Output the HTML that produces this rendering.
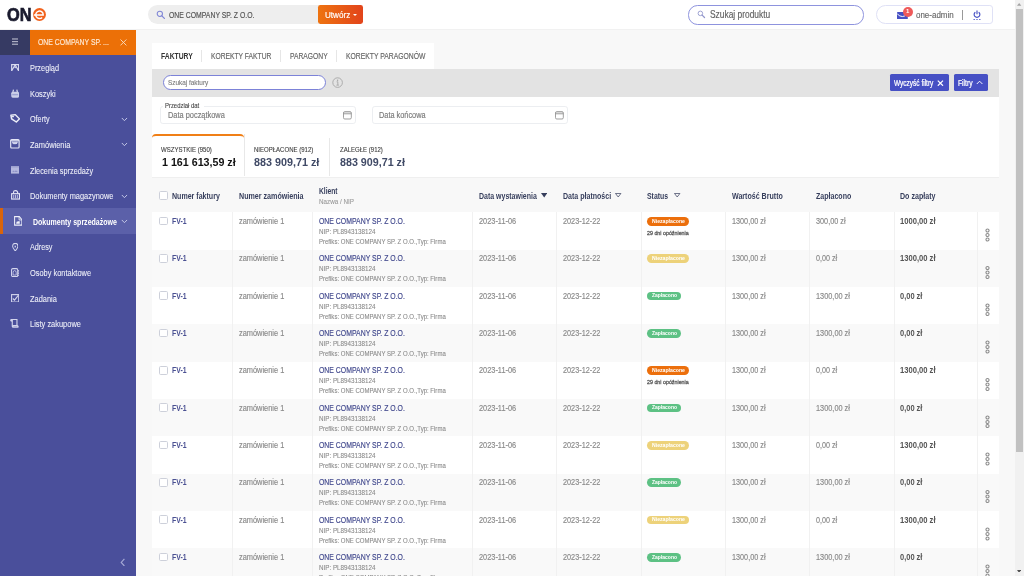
<!DOCTYPE html><html><head><meta charset="utf-8"><style>
*{box-sizing:border-box;margin:0;padding:0}
html,body{width:1024px;height:576px;overflow:hidden;background:#f8f8f8}
body{font-family:"Liberation Sans",sans-serif}
#app{position:absolute;left:0;top:0;width:1280px;height:720px;zoom:0.8;will-change:transform;background:#f8f8f8;overflow:hidden}
.a{position:absolute;white-space:nowrap}
.t{position:absolute;white-space:nowrap;transform-origin:0 0}
</style></head><body><div id="app"><div class="a" style="left:0;top:0;width:1280px;height:37.4px;background:#fff;border-bottom:1.1px solid #f1f1f1"></div>
<div class="t" style="left:8.88px;top:6.02px;font-size:21.8px;line-height:26.16px;font-weight:700;color:#1a1b2e;transform:scaleX(0.9388);-webkit-text-stroke:0.8px #1a1b2e;">ON</div>
<svg class="a" style="left:41.2px;top:10.3px" width="16.2" height="16.2" viewBox="0 0 16 16"><circle cx="8" cy="8" r="8" fill="#f2621c"/><path d="M1 8.6 H12.6 A4.6 4.6 0 1 0 11.3 11.6" fill="none" stroke="#fff" stroke-width="1.8"/></svg>
<div class="a" style="left:185px;top:6.5px;width:220px;height:24px;background:#eeeeee;border-radius:12px 0 0 12px"></div>
<svg class="a" style="left:194.5px;top:13px" width="12" height="12" viewBox="0 0 12 12"><circle cx="4.8" cy="4.8" r="3.3" fill="none" stroke="#7f86d6" stroke-width="1.3"/><path d="M7.3 7.3 L10.5 10.5" stroke="#7f86d6" stroke-width="1.6" stroke-linecap="round"/></svg>
<div class="t" style="left:211.25px;top:11.95px;font-size:10.4px;line-height:12.48px;font-weight:400;color:#555;transform:scaleX(0.8260);-webkit-text-stroke:0.2px #555;">ONE COMPANY SP. Z O.O.</div>
<div class="a" style="left:397.5px;top:6.5px;width:56px;height:24px;border-radius:3px;background:linear-gradient(90deg,#ee7310,#e2441b)"></div>
<div class="t" style="left:405.88px;top:12.18px;font-size:10.5px;line-height:12.60px;font-weight:400;color:#fff;transform:scaleX(0.9678);-webkit-text-stroke:0.2px #fff;">Utwórz</div>
<div class="a" style="left:441px;top:17px;width:0;height:0;border-left:3px solid transparent;border-right:3px solid transparent;border-top:3px solid #fff"></div>
<div class="a" style="left:860px;top:6.6px;width:219.5px;height:24.1px;border:1.3px solid #8e93de;border-radius:12px;background:#fff"></div>
<svg class="a" style="left:871px;top:13px" width="11" height="11" viewBox="0 0 12 12"><circle cx="4.6" cy="4.6" r="3.1" fill="none" stroke="#9296cc" stroke-width="1.2"/><path d="M7 7 L10.3 10.3" stroke="#9296cc" stroke-width="1.7" stroke-linecap="round"/></svg>
<div class="t" style="left:887.25px;top:11.76px;font-size:12.6px;line-height:15.12px;font-weight:400;color:#626262;transform:scaleX(0.8333);-webkit-text-stroke:0.2px #626262;">Szukaj produktu</div>
<div class="a" style="left:1095px;top:6.5px;width:146px;height:24px;border:1px solid #dfe1f6;border-radius:12px 4px 4px 12px;background:#fff"></div>
<svg class="a" style="left:1121px;top:14.4px" width="13.5" height="9.8" viewBox="0 0 13.5 9.8"><rect x="0" y="0" width="13.5" height="9.8" rx="0.8" fill="#4650c4"/><path d="M0.3 2.4 Q6.7 9 13.2 2.4" fill="none" stroke="#fff" stroke-width="1.2"/></svg>
<div class="a" style="left:1128.3px;top:8.8px;width:12.4px;height:12.4px;border-radius:50%;background:#ef5a5a;color:#fff;font-size:7.5px;font-weight:700;text-align:center;line-height:12.4px">1</div>
<div class="t" style="left:1144.88px;top:12.67px;font-size:11px;line-height:13.20px;font-weight:400;color:#6a6a6a;transform:scaleX(0.9063);-webkit-text-stroke:0.2px #6a6a6a;">one-admin</div>
<div class="a" style="left:1202.5px;top:12.5px;width:1px;height:12.5px;background:#999"></div>
<svg class="a" style="left:1216px;top:12.2px" width="10" height="13" viewBox="0 0 10 13"><path d="M2.9 2.7 A3.6 3.6 0 1 0 7.1 2.7" fill="none" stroke="#4650c4" stroke-width="1.45"/><path d="M5 0.5 V5.3" stroke="#4650c4" stroke-width="1.45"/><path d="M0.6 12.1 H2.4 M4.1 12.1 H5.9 M7.6 12.1 H9.4" stroke="#4650c4" stroke-width="1.25"/></svg>
<div class="a" style="left:0;top:37.5px;width:170.5px;height:683px;background:#4a4f9b"></div>
<div class="a" style="left:0;top:37.5px;width:37.5px;height:31px;background:#363a63"></div>
<div class="a" style="left:37.5px;top:37.5px;width:133px;height:31px;background:#ec7007"></div>
<svg class="a" style="left:14.6px;top:48px" width="8.2" height="9" viewBox="0 0 8.2 9"><path d="M0 1.25 H8.2 M0 4.6 H8.2 M0 7.75 H8.2" stroke="#dcdde8" stroke-width="1.1"/></svg>
<div class="t" style="left:47.88px;top:46.45px;font-size:10.4px;line-height:12.48px;font-weight:400;color:#fde8d4;transform:scaleX(0.8292);-webkit-text-stroke:0.2px #fde8d4;">ONE COMPANY SP. ...</div>
<svg class="a" style="left:150.6px;top:48.3px" width="8.6" height="8.6" viewBox="0 0 8.6 8.6"><path d="M0.6 0.6 L8 8 M8 0.6 L0.6 8" stroke="#fbdcc0" stroke-width="1.15"/></svg>
<svg class="a" style="left:13.50px;top:79.88px" width="10.38" height="9.38" viewBox="0 0 10 10" preserveAspectRatio="none"><path d="M0.8 9.2 V0.8 H9.2 V9.2 M0.8 9.2 L3.5 4 L5 1.5 L6.5 4 L9.2 9.2" fill="none" stroke="#d9dbef" stroke-width="1.4"/><circle cx="5" cy="4.5" r="1" fill="#d9dbef"/></svg>
<div class="t" style="left:37.38px;top:78.90px;font-size:10.5px;line-height:12.60px;font-weight:400;color:#eeeff8;transform:scaleX(0.8774);-webkit-text-stroke:0.1px #eeeff8;">Przegląd</div>
<svg class="a" style="left:13.50px;top:111.25px" width="10.38" height="11.13" viewBox="0 0 10 10" preserveAspectRatio="none"><path d="M2.3 3.5 L3 0.6 M7.7 3.5 L7 0.6" stroke="#d0d2ea" stroke-width="1.5"/><rect x="0.3" y="3" width="9.4" height="6.8" rx="1.8" fill="#cdd0e9"/><rect x="1.5" y="5.5" width="7" height="1.6" fill="#9ea2d2"/></svg>
<div class="t" style="left:37.38px;top:110.90px;font-size:10.5px;line-height:12.60px;font-weight:400;color:#eeeff8;transform:scaleX(0.8858);-webkit-text-stroke:0.1px #eeeff8;">Koszyki</div>
<svg class="a" style="left:12.50px;top:142.50px" width="12.75" height="10.88" viewBox="0 0 10 10" preserveAspectRatio="none"><path d="M0.9 1.2 L5.2 0.8 L9.3 5.6 L6.2 9.2 L1.6 5.6 Z" fill="none" stroke="#eceef8" stroke-width="1.5" stroke-linejoin="round"/><circle cx="2.9" cy="2.8" r="1" fill="#eceef8"/></svg>
<div class="t" style="left:37.38px;top:142.90px;font-size:10.5px;line-height:12.60px;font-weight:400;color:#eeeff8;transform:scaleX(0.8607);-webkit-text-stroke:0.1px #eeeff8;">Oferty</div>
<svg class="a" style="left:151.8px;top:146.0px" width="9" height="7" viewBox="0 0 9 7"><path d="M1 1.2 L4.3 4.6 L7.6 1.2" fill="none" stroke="#c3c6e6" stroke-width="1.25"/></svg>
<svg class="a" style="left:12.88px;top:173.88px" width="12.25" height="12.13" viewBox="0 0 10 10" preserveAspectRatio="none"><rect x="0.7" y="0.7" width="8.6" height="8.6" rx="1" fill="none" stroke="#e4e6f6" stroke-width="1.2"/><path d="M0.7 1.8 H9.3" stroke="#e4e6f6" stroke-width="1"/><path d="M2.6 2.6 V3.6 Q2.6 4.8 3.8 4.8 H6.2 Q7.4 4.8 7.4 3.6 V2.6" fill="#c8cbe8" stroke="#e4e6f6" stroke-width="0.9"/></svg>
<div class="t" style="left:37.38px;top:174.90px;font-size:10.5px;line-height:12.60px;font-weight:400;color:#eeeff8;transform:scaleX(0.8918);-webkit-text-stroke:0.1px #eeeff8;">Zamówienia</div>
<svg class="a" style="left:151.8px;top:178.0px" width="9" height="7" viewBox="0 0 9 7"><path d="M1 1.2 L4.3 4.6 L7.6 1.2" fill="none" stroke="#c3c6e6" stroke-width="1.25"/></svg>
<svg class="a" style="left:13.62px;top:207.75px" width="10.12" height="9.50" viewBox="0 0 10 10" preserveAspectRatio="none"><rect x="0" y="0" width="10" height="10" fill="#b4b7de"/><rect x="0" y="0" width="10" height="2" fill="#9da1d0"/><path d="M1.5 8 L3 6 L4.5 7.5 L6 5.5 L8.5 8 Z" fill="#8e92c8"/></svg>
<div class="t" style="left:37.38px;top:206.90px;font-size:10.5px;line-height:12.60px;font-weight:400;color:#eeeff8;transform:scaleX(0.8744);-webkit-text-stroke:0.1px #eeeff8;">Zlecenia sprzedaży</div>
<svg class="a" style="left:13.75px;top:237.75px" width="11.38" height="12.13" viewBox="0 0 10 10" preserveAspectRatio="none"><rect x="0.7" y="3.8" width="8.6" height="5.5" fill="none" stroke="#e4e6f6" stroke-width="1.2"/><path d="M2.8 3.8 V2 Q2.8 0.7 5 0.7 Q7.5 0.7 7.5 3.8" fill="none" stroke="#e4e6f6" stroke-width="1.2"/><path d="M3 5 V8.5 M5 5 V8.5 M7 5 V8.5" stroke="#c3c6e8" stroke-width="1"/></svg>
<div class="t" style="left:37.38px;top:238.90px;font-size:10.5px;line-height:12.60px;font-weight:400;color:#eeeff8;transform:scaleX(0.8852);-webkit-text-stroke:0.1px #eeeff8;">Dokumenty magazynowe</div>
<svg class="a" style="left:151.8px;top:242.0px" width="9" height="7" viewBox="0 0 9 7"><path d="M1 1.2 L4.3 4.6 L7.6 1.2" fill="none" stroke="#c3c6e6" stroke-width="1.25"/></svg>
<div class="a" style="left:0;top:260.6px;width:170.5px;height:32px;background:#5b60a9"></div>
<div class="a" style="left:0;top:260.6px;width:3.5px;height:32px;background:#d9640a"></div>
<svg class="a" style="left:17.12px;top:269.88px" width="10.62" height="12.38" viewBox="0 0 10 10" preserveAspectRatio="none"><path d="M0.7 0.7 H6.3 L9.3 3.7 V9.3 H0.7 Z" fill="none" stroke="#eef0fa" stroke-width="1.2"/><path d="M2.5 7.8 Q2.5 5.4 5 5.4 H6.8 V7.8 Z" fill="#eef0fa"/><path d="M6 1 V4 H9" fill="none" stroke="#eef0fa" stroke-width="0.9"/></svg>
<div class="t" style="left:40.75px;top:270.90px;font-size:10.5px;line-height:12.60px;font-weight:700;color:#fff;transform:scaleX(0.8369);">Dokumenty sprzedażowe</div>
<svg class="a" style="left:151.8px;top:274.0px" width="9" height="7" viewBox="0 0 9 7"><path d="M1 1.2 L4.3 4.6 L7.6 1.2" fill="none" stroke="#c3c6e6" stroke-width="1.25"/></svg>
<svg class="a" style="left:14.62px;top:303.25px" width="8.12" height="10.62" viewBox="0 0 10 10" preserveAspectRatio="none"><path d="M5 9.3 C1.8 6.5 0.9 5 0.9 3.9 A4.1 3.5 0 0 1 9.1 3.9 C9.1 5 8.2 6.5 5 9.3 Z" fill="none" stroke="#d5d7ee" stroke-width="1.4"/><rect x="4" y="3.2" width="2" height="2" fill="#d5d7ee"/></svg>
<div class="t" style="left:37.38px;top:302.90px;font-size:10.5px;line-height:12.60px;font-weight:400;color:#eeeff8;transform:scaleX(0.8600);-webkit-text-stroke:0.1px #eeeff8;">Adresy</div>
<svg class="a" style="left:13.62px;top:334.62px" width="10.12" height="11.50" viewBox="0 0 10 10" preserveAspectRatio="none"><rect x="0.7" y="0.7" width="7.6" height="8.6" rx="1.5" fill="none" stroke="#d5d7ee" stroke-width="1.3"/><path d="M9.3 2.5 V3.7 M9.3 5 V6.2 M9.3 7.3 V8.3" stroke="#d5d7ee" stroke-width="1.3"/><path d="M2.6 7.7 V5 Q2.6 2.8 4.5 2.8 Q6.4 2.8 6.4 5 V7.7 Z" fill="none" stroke="#d5d7ee" stroke-width="0.9"/></svg>
<div class="t" style="left:37.38px;top:334.90px;font-size:10.5px;line-height:12.60px;font-weight:400;color:#eeeff8;transform:scaleX(0.8840);-webkit-text-stroke:0.1px #eeeff8;">Osoby kontaktowe</div>
<svg class="a" style="left:13.38px;top:367.12px" width="10.38" height="10.87" viewBox="0 0 10 10" preserveAspectRatio="none"><rect x="0.7" y="0.7" width="8.6" height="8.6" fill="none" stroke="#d2d4ec" stroke-width="1.3"/><path d="M2.2 5.2 L4.2 7 L8.8 1.6" fill="none" stroke="#d2d4ec" stroke-width="1.4"/></svg>
<div class="t" style="left:37.38px;top:366.90px;font-size:10.5px;line-height:12.60px;font-weight:400;color:#eeeff8;transform:scaleX(0.8824);-webkit-text-stroke:0.1px #eeeff8;">Zadania</div>
<svg class="a" style="left:13.12px;top:398.88px" width="10.88" height="11.00" viewBox="0 0 10 10" preserveAspectRatio="none"><path d="M0.8 1.6 Q0.8 0.6 2 0.6 H8 V7.8" fill="none" stroke="#d2d4ec" stroke-width="1.3"/><path d="M2.6 1.2 V8.2 Q2.6 9.3 3.8 9.3 H8.8 Q9.5 9.3 9.2 8.2 Q8.9 7.5 8 7.5 H4 Q3.4 7.5 3.4 8.5" fill="none" stroke="#d2d4ec" stroke-width="1.3"/><circle cx="1.6" cy="1.8" r="1.2" fill="#d2d4ec"/></svg>
<div class="t" style="left:37.38px;top:398.90px;font-size:10.5px;line-height:12.60px;font-weight:400;color:#eeeff8;transform:scaleX(0.8878);-webkit-text-stroke:0.1px #eeeff8;">Listy zakupowe</div>
<svg class="a" style="left:150.5px;top:697px" width="7" height="11" viewBox="0 0 7 11"><path d="M5.5 1 L1.5 5.5 L5.5 10" fill="none" stroke="#a7abd6" stroke-width="1.4"/></svg>
<div class="a" style="left:190.6px;top:53.75px;width:351.4px;height:32.5px;background:#fff"></div>
<div class="t" style="left:201.50px;top:63.68px;font-size:10.5px;line-height:12.60px;font-weight:700;color:#333;transform:scaleX(0.8081);">FAKTURY</div>
<div class="t" style="left:263.25px;top:63.68px;font-size:10.5px;line-height:12.60px;font-weight:400;color:#666;transform:scaleX(0.8006);-webkit-text-stroke:0.2px #666;">KOREKTY FAKTUR</div>
<div class="t" style="left:362.00px;top:63.68px;font-size:10.5px;line-height:12.60px;font-weight:400;color:#666;transform:scaleX(0.8024);-webkit-text-stroke:0.2px #666;">PARAGONY</div>
<div class="t" style="left:432.00px;top:63.68px;font-size:10.5px;line-height:12.60px;font-weight:400;color:#666;transform:scaleX(0.8100);-webkit-text-stroke:0.2px #666;">KOREKTY PARAGONÓW</div>
<div class="a" style="left:251.6px;top:62.5px;width:1px;height:15px;background:#e6e6e6"></div>
<div class="a" style="left:350.4px;top:62.5px;width:1px;height:15px;background:#e6e6e6"></div>
<div class="a" style="left:420.4px;top:62.5px;width:1px;height:15px;background:#e6e6e6"></div>
<div class="a" style="left:190.6px;top:86.25px;width:1058px;height:35.6px;background:#e3e3e3"></div>
<div class="a" style="left:203.6px;top:93.9px;width:203.3px;height:18.5px;background:#fff;border:1.3px solid #7c82d8;border-radius:10px"></div>
<div class="t" style="left:210.12px;top:99.07px;font-size:8.5px;line-height:10.20px;font-weight:400;color:#777;transform:scaleX(0.9421);-webkit-text-stroke:0.12px #777;">Szukaj faktury</div>
<svg class="a" style="left:415px;top:96.5px" width="14" height="14" viewBox="0 0 14 14"><circle cx="7" cy="7" r="6" fill="none" stroke="#a5a5a5" stroke-width="1.1"/><circle cx="7" cy="4" r="0.9" fill="#a5a5a5"/><path d="M5.8 6 H7.3 V10 M5.6 10.2 H8.6" fill="none" stroke="#a5a5a5" stroke-width="1.1"/></svg>
<div class="a" style="left:1112px;top:92.9px;width:74.5px;height:21px;background:#4650c4;border-radius:2px"></div>
<div class="t" style="left:1117.62px;top:97.20px;font-size:10.4px;line-height:12.48px;font-weight:400;color:#fff;transform:scaleX(0.7819);-webkit-text-stroke:0.3px #fff;">Wyczyść filtry</div>
<svg class="a" style="left:1171px;top:99.5px" width="8.5" height="8" viewBox="0 0 8.5 8"><path d="M1 0.8 L7.5 7.2 M7.5 0.8 L1 7.2" stroke="#fff" stroke-width="1.5"/></svg>
<div class="a" style="left:1192.4px;top:92.9px;width:42.6px;height:21px;background:#4650c4;border-radius:2px"></div>
<div class="t" style="left:1198.12px;top:97.20px;font-size:10.4px;line-height:12.48px;font-weight:400;color:#fff;transform:scaleX(0.8043);-webkit-text-stroke:0.3px #fff;">Filtry</div>
<svg class="a" style="left:1220px;top:100px" width="9" height="6" viewBox="0 0 9 6"><path d="M1 5 L4.5 1.5 L8 5" fill="none" stroke="#fff" stroke-width="1.2"/></svg>
<div class="a" style="left:190.6px;top:121.8px;width:1058px;height:100.2px;background:#fff"></div>
<div class="a" style="left:200.4px;top:131.9px;width:244.7px;height:23px;border:1.1px solid #eceef1;border-radius:3.5px"></div>
<div class="a" style="left:204px;top:127px;width:51px;height:8px;background:#fff"></div>
<div class="t" style="left:205.75px;top:127.44px;font-size:8px;line-height:9.60px;font-weight:400;color:#444;transform:scaleX(0.9251);-webkit-text-stroke:0.12px #444;">Przedział dat</div>
<div class="t" style="left:209.50px;top:137.42px;font-size:11px;line-height:13.20px;font-weight:400;color:#7a7a7a;transform:scaleX(0.8415);-webkit-text-stroke:0.2px #7a7a7a;">Data początkowa</div>
<div class="a" style="left:465.6px;top:131.9px;width:244px;height:23px;border:1.1px solid #eceef1;border-radius:3.5px"></div>
<div class="t" style="left:474.12px;top:137.42px;font-size:11px;line-height:13.20px;font-weight:400;color:#7a7a7a;transform:scaleX(0.8358);-webkit-text-stroke:0.2px #7a7a7a;">Data końcowa</div>
<svg class="a" style="left:429px;top:139px" width="11" height="11" viewBox="0 0 11 11"><rect x="0.6" y="0.8" width="9.8" height="9.2" rx="1.6" fill="none" stroke="#8c8c8c" stroke-width="1.05"/><path d="M0.6 2.6 H10.4 M0.6 3.6 H10.4" stroke="#8c8c8c" stroke-width="0.8"/></svg>
<svg class="a" style="left:694px;top:139px" width="11" height="11" viewBox="0 0 11 11"><rect x="0.6" y="0.8" width="9.8" height="9.2" rx="1.6" fill="none" stroke="#8c8c8c" stroke-width="1.05"/><path d="M0.6 2.6 H10.4 M0.6 3.6 H10.4" stroke="#8c8c8c" stroke-width="0.8"/></svg>
<div class="a" style="left:190.6px;top:167.3px;width:114.4px;height:54.7px;background:#fff;border-top:2.6px solid #f07f16;border-radius:5px 5px 0 0"></div>
<div class="a" style="left:304.5px;top:168px;width:1px;height:51.5px;background:#e8e8e8"></div>
<div class="a" style="left:411.5px;top:172.4px;width:1px;height:47px;background:#e8e8e8"></div>
<div class="a" style="left:190.6px;top:221px;width:1058px;height:1px;background:#efefef"></div>
<div class="t" style="left:201.25px;top:181.94px;font-size:8.5px;line-height:10.20px;font-weight:400;color:#3a3a3a;transform:scaleX(0.8900);-webkit-text-stroke:0.12px #3a3a3a;">WSZYSTKIE (950)</div>
<div class="t" style="left:201.88px;top:193.90px;font-size:14.5px;line-height:17.40px;font-weight:700;color:#111;transform:scaleX(0.9218);">1 161 613,59 zł</div>
<div class="t" style="left:317.62px;top:181.94px;font-size:8.5px;line-height:10.20px;font-weight:400;color:#3a3a3a;transform:scaleX(0.8863);-webkit-text-stroke:0.12px #3a3a3a;">NIEOPŁACONE (912)</div>
<div class="t" style="left:317.62px;top:193.90px;font-size:14.5px;line-height:17.40px;font-weight:700;color:#404a66;transform:scaleX(0.9291);">883 909,71 zł</div>
<div class="t" style="left:424.38px;top:181.94px;font-size:8.5px;line-height:10.20px;font-weight:400;color:#3a3a3a;transform:scaleX(0.8864);-webkit-text-stroke:0.12px #3a3a3a;">ZALEGŁE (912)</div>
<div class="t" style="left:424.38px;top:193.90px;font-size:14.5px;line-height:17.40px;font-weight:700;color:#404a66;transform:scaleX(0.9235);">883 909,71 zł</div>
<div class="a" style="left:190.6px;top:222px;width:1058.4px;height:43.25px;background:#f8f8f8"></div>
<div class="t" style="left:215.00px;top:238.45px;font-size:10.4px;line-height:12.48px;font-weight:700;color:#363e5c;transform:scaleX(0.8490);">Numer faktury</div>
<div class="t" style="left:298.50px;top:238.45px;font-size:10.4px;line-height:12.48px;font-weight:700;color:#363e5c;transform:scaleX(0.8573);">Numer zamówienia</div>
<div class="t" style="left:599.12px;top:238.45px;font-size:10.4px;line-height:12.48px;font-weight:700;color:#363e5c;transform:scaleX(0.8404);">Data wystawienia</div>
<div class="t" style="left:703.75px;top:238.45px;font-size:10.4px;line-height:12.48px;font-weight:700;color:#363e5c;transform:scaleX(0.8470);">Data płatności</div>
<div class="t" style="left:809.00px;top:238.45px;font-size:10.4px;line-height:12.48px;font-weight:700;color:#363e5c;transform:scaleX(0.8287);">Status</div>
<div class="t" style="left:914.50px;top:238.45px;font-size:10.4px;line-height:12.48px;font-weight:700;color:#363e5c;transform:scaleX(0.8512);">Wartość Brutto</div>
<div class="t" style="left:1019.88px;top:238.45px;font-size:10.4px;line-height:12.48px;font-weight:700;color:#363e5c;transform:scaleX(0.8477);">Zapłacono</div>
<div class="t" style="left:1124.62px;top:238.45px;font-size:10.4px;line-height:12.48px;font-weight:700;color:#363e5c;transform:scaleX(0.8527);">Do zapłaty</div>
<div class="t" style="left:399.12px;top:232.83px;font-size:10.4px;line-height:12.48px;font-weight:700;color:#363e5c;transform:scaleX(0.8035);">Klient</div>
<div class="t" style="left:399.12px;top:246.94px;font-size:8.5px;line-height:10.20px;font-weight:400;color:#999;transform:scaleX(0.9250);-webkit-text-stroke:0.12px #999;">Nazwa / NIP</div>
<div class="a" style="left:198.75px;top:238.9px;width:10.75px;height:10.75px;border:1.1px solid #cdd0da;border-radius:2px;background:#fff"></div>
<svg class="a" style="left:676px;top:241px" width="8" height="6" viewBox="0 0 8 6"><path d="M0 0 H8 L4 5.5 Z" fill="#363e5c"/></svg>
<svg class="a" style="left:769px;top:241px" width="8" height="6" viewBox="0 0 8 6"><path d="M0.6 0.6 H7.4 L4 5 Z" fill="none" stroke="#363e5c" stroke-width="0.9"/></svg>
<svg class="a" style="left:843px;top:241px" width="8" height="6" viewBox="0 0 8 6"><path d="M0.6 0.6 H7.4 L4 5 Z" fill="none" stroke="#363e5c" stroke-width="0.9"/></svg>
<div class="a" style="left:190.6px;top:265.25px;width:1058.4px;height:46.98px;background:#fff"></div>
<div class="a" style="left:290.3px;top:265.25px;width:1px;height:46.98px;background:#f1f1f1"></div>
<div class="a" style="left:390.6px;top:265.25px;width:1px;height:46.98px;background:#f1f1f1"></div>
<div class="a" style="left:590.4px;top:265.25px;width:1px;height:46.98px;background:#f1f1f1"></div>
<div class="a" style="left:695px;top:265.25px;width:1px;height:46.98px;background:#f1f1f1"></div>
<div class="a" style="left:800.9px;top:265.25px;width:1px;height:46.98px;background:#f1f1f1"></div>
<div class="a" style="left:905.75px;top:265.25px;width:1px;height:46.98px;background:#f1f1f1"></div>
<div class="a" style="left:1011.5px;top:265.25px;width:1px;height:46.98px;background:#f1f1f1"></div>
<div class="a" style="left:1116.9px;top:265.25px;width:1px;height:46.98px;background:#f1f1f1"></div>
<div class="a" style="left:1221.4px;top:265.25px;width:1px;height:46.98px;background:#f1f1f1"></div>
<div class="a" style="left:198.75px;top:270.85px;width:10.75px;height:10.75px;border:1.1px solid #cdd0da;border-radius:2px;background:#fff"></div>
<div class="t" style="left:214.88px;top:270.08px;font-size:10.4px;line-height:12.48px;font-weight:700;color:#4a5092;transform:scaleX(0.8291);">FV-1</div>
<div class="t" style="left:298.75px;top:270.08px;font-size:10.4px;line-height:12.48px;font-weight:400;color:#8a8a8a;transform:scaleX(0.8902);-webkit-text-stroke:0.2px #8a8a8a;">zamówienie 1</div>
<div class="t" style="left:398.62px;top:270.08px;font-size:10.4px;line-height:12.48px;font-weight:400;color:#434a8e;transform:scaleX(0.8299);-webkit-text-stroke:0.2px #434a8e;">ONE COMPANY SP. Z O.O.</div>
<div class="t" style="left:398.62px;top:284.82px;font-size:8.5px;line-height:10.20px;font-weight:400;color:#8a8a8a;transform:scaleX(0.9224);-webkit-text-stroke:0.12px #8a8a8a;">NIP: PL8943138124</div>
<div class="t" style="left:398.62px;top:297.57px;font-size:8.5px;line-height:10.20px;font-weight:400;color:#8a8a8a;transform:scaleX(0.8854);-webkit-text-stroke:0.12px #8a8a8a;">Prefiks: ONE COMPANY SP. Z O.O.,Typ: Firma</div>
<div class="t" style="left:598.62px;top:270.08px;font-size:10.4px;line-height:12.48px;font-weight:400;color:#8a8a8a;transform:scaleX(0.8864);-webkit-text-stroke:0.2px #8a8a8a;">2023-11-06</div>
<div class="t" style="left:703.88px;top:270.08px;font-size:10.4px;line-height:12.48px;font-weight:400;color:#8a8a8a;transform:scaleX(0.8783);-webkit-text-stroke:0.2px #8a8a8a;">2023-12-22</div>
<div class="a" style="left:808.75px;top:271.25px;width:52.4px;height:10.75px;border-radius:6px;background:#ec6f0c"></div>
<div class="t" style="left:814.62px;top:271.95px;font-size:7.5px;line-height:9.00px;font-weight:700;color:#fff;transform:scaleX(0.8584);">Niezapłacone</div>
<div class="t" style="left:809.25px;top:287.45px;font-size:7.5px;line-height:9.00px;font-weight:400;color:#555;transform:scaleX(0.8868);-webkit-text-stroke:0.35px #555;">29 dni opóźnienia</div>
<div class="t" style="left:914.50px;top:270.08px;font-size:10.4px;line-height:12.48px;font-weight:400;color:#8a8a8a;transform:scaleX(0.8737);-webkit-text-stroke:0.2px #8a8a8a;">1300,00 zł</div>
<div class="t" style="left:1019.50px;top:270.08px;font-size:10.4px;line-height:12.48px;font-weight:400;color:#8a8a8a;transform:scaleX(0.8749);-webkit-text-stroke:0.2px #8a8a8a;">300,00 zł</div>
<div class="t" style="left:1125.00px;top:270.08px;font-size:10.4px;line-height:12.48px;font-weight:700;color:#555;transform:scaleX(0.9149);">1000,00 zł</div>
<svg class="a" style="left:1230.0px;top:285.0px;overflow:visible" width="8.75" height="20.0" viewBox="0 0 7 16"><circle cx="3.5" cy="2.5" r="1.55" fill="none" stroke="#8a8a8a" stroke-width="1.05"/><circle cx="3.5" cy="7.0" r="1.55" fill="none" stroke="#8a8a8a" stroke-width="1.05"/><circle cx="3.5" cy="11.5" r="1.55" fill="none" stroke="#8a8a8a" stroke-width="1.05"/></svg>
<div class="a" style="left:190.6px;top:311.93px;width:1058.4px;height:46.98px;background:#f9f9f9"></div>
<div class="a" style="left:290.3px;top:311.93px;width:1px;height:46.98px;background:#f1f1f1"></div>
<div class="a" style="left:390.6px;top:311.93px;width:1px;height:46.98px;background:#f1f1f1"></div>
<div class="a" style="left:590.4px;top:311.93px;width:1px;height:46.98px;background:#f1f1f1"></div>
<div class="a" style="left:695px;top:311.93px;width:1px;height:46.98px;background:#f1f1f1"></div>
<div class="a" style="left:800.9px;top:311.93px;width:1px;height:46.98px;background:#f1f1f1"></div>
<div class="a" style="left:905.75px;top:311.93px;width:1px;height:46.98px;background:#f1f1f1"></div>
<div class="a" style="left:1011.5px;top:311.93px;width:1px;height:46.98px;background:#f1f1f1"></div>
<div class="a" style="left:1116.9px;top:311.93px;width:1px;height:46.98px;background:#f1f1f1"></div>
<div class="a" style="left:1221.4px;top:311.93px;width:1px;height:46.98px;background:#f1f1f1"></div>
<div class="a" style="left:198.75px;top:317.53000000000003px;width:10.75px;height:10.75px;border:1.1px solid #cdd0da;border-radius:2px;background:#fff"></div>
<div class="t" style="left:214.88px;top:316.76px;font-size:10.4px;line-height:12.48px;font-weight:700;color:#4a5092;transform:scaleX(0.8291);">FV-1</div>
<div class="t" style="left:298.75px;top:316.76px;font-size:10.4px;line-height:12.48px;font-weight:400;color:#8a8a8a;transform:scaleX(0.8902);-webkit-text-stroke:0.2px #8a8a8a;">zamówienie 1</div>
<div class="t" style="left:398.62px;top:316.76px;font-size:10.4px;line-height:12.48px;font-weight:400;color:#434a8e;transform:scaleX(0.8299);-webkit-text-stroke:0.2px #434a8e;">ONE COMPANY SP. Z O.O.</div>
<div class="t" style="left:398.62px;top:331.50px;font-size:8.5px;line-height:10.20px;font-weight:400;color:#8a8a8a;transform:scaleX(0.9224);-webkit-text-stroke:0.12px #8a8a8a;">NIP: PL8943138124</div>
<div class="t" style="left:398.62px;top:344.25px;font-size:8.5px;line-height:10.20px;font-weight:400;color:#8a8a8a;transform:scaleX(0.8854);-webkit-text-stroke:0.12px #8a8a8a;">Prefiks: ONE COMPANY SP. Z O.O.,Typ: Firma</div>
<div class="t" style="left:598.62px;top:316.76px;font-size:10.4px;line-height:12.48px;font-weight:400;color:#8a8a8a;transform:scaleX(0.8864);-webkit-text-stroke:0.2px #8a8a8a;">2023-11-06</div>
<div class="t" style="left:703.88px;top:316.76px;font-size:10.4px;line-height:12.48px;font-weight:400;color:#8a8a8a;transform:scaleX(0.8783);-webkit-text-stroke:0.2px #8a8a8a;">2023-12-22</div>
<div class="a" style="left:808.75px;top:317.93px;width:52.4px;height:10.75px;border-radius:6px;background:#edd27a"></div>
<div class="t" style="left:814.62px;top:318.63px;font-size:7.5px;line-height:9.00px;font-weight:700;color:#fff;transform:scaleX(0.8584);">Niezapłacone</div>
<div class="t" style="left:914.50px;top:316.76px;font-size:10.4px;line-height:12.48px;font-weight:400;color:#8a8a8a;transform:scaleX(0.8737);-webkit-text-stroke:0.2px #8a8a8a;">1300,00 zł</div>
<div class="t" style="left:1019.50px;top:316.76px;font-size:10.4px;line-height:12.48px;font-weight:400;color:#8a8a8a;transform:scaleX(0.8625);-webkit-text-stroke:0.2px #8a8a8a;">0,00 zł</div>
<div class="t" style="left:1125.00px;top:316.76px;font-size:10.4px;line-height:12.48px;font-weight:700;color:#555;transform:scaleX(0.9149);">1300,00 zł</div>
<svg class="a" style="left:1230.0px;top:331.25px;overflow:visible" width="8.75" height="20.0" viewBox="0 0 7 16"><circle cx="3.5" cy="3.0" r="1.55" fill="none" stroke="#8a8a8a" stroke-width="1.05"/><circle cx="3.5" cy="7.5" r="1.55" fill="none" stroke="#8a8a8a" stroke-width="1.05"/><circle cx="3.5" cy="12.0" r="1.55" fill="none" stroke="#8a8a8a" stroke-width="1.05"/></svg>
<div class="a" style="left:190.6px;top:358.61px;width:1058.4px;height:46.98px;background:#fff"></div>
<div class="a" style="left:290.3px;top:358.61px;width:1px;height:46.98px;background:#f1f1f1"></div>
<div class="a" style="left:390.6px;top:358.61px;width:1px;height:46.98px;background:#f1f1f1"></div>
<div class="a" style="left:590.4px;top:358.61px;width:1px;height:46.98px;background:#f1f1f1"></div>
<div class="a" style="left:695px;top:358.61px;width:1px;height:46.98px;background:#f1f1f1"></div>
<div class="a" style="left:800.9px;top:358.61px;width:1px;height:46.98px;background:#f1f1f1"></div>
<div class="a" style="left:905.75px;top:358.61px;width:1px;height:46.98px;background:#f1f1f1"></div>
<div class="a" style="left:1011.5px;top:358.61px;width:1px;height:46.98px;background:#f1f1f1"></div>
<div class="a" style="left:1116.9px;top:358.61px;width:1px;height:46.98px;background:#f1f1f1"></div>
<div class="a" style="left:1221.4px;top:358.61px;width:1px;height:46.98px;background:#f1f1f1"></div>
<div class="a" style="left:198.75px;top:364.21000000000004px;width:10.75px;height:10.75px;border:1.1px solid #cdd0da;border-radius:2px;background:#fff"></div>
<div class="t" style="left:214.88px;top:363.44px;font-size:10.4px;line-height:12.48px;font-weight:700;color:#4a5092;transform:scaleX(0.8291);">FV-1</div>
<div class="t" style="left:298.75px;top:363.44px;font-size:10.4px;line-height:12.48px;font-weight:400;color:#8a8a8a;transform:scaleX(0.8902);-webkit-text-stroke:0.2px #8a8a8a;">zamówienie 1</div>
<div class="t" style="left:398.62px;top:363.44px;font-size:10.4px;line-height:12.48px;font-weight:400;color:#434a8e;transform:scaleX(0.8299);-webkit-text-stroke:0.2px #434a8e;">ONE COMPANY SP. Z O.O.</div>
<div class="t" style="left:398.62px;top:378.18px;font-size:8.5px;line-height:10.20px;font-weight:400;color:#8a8a8a;transform:scaleX(0.9224);-webkit-text-stroke:0.12px #8a8a8a;">NIP: PL8943138124</div>
<div class="t" style="left:398.62px;top:390.93px;font-size:8.5px;line-height:10.20px;font-weight:400;color:#8a8a8a;transform:scaleX(0.8854);-webkit-text-stroke:0.12px #8a8a8a;">Prefiks: ONE COMPANY SP. Z O.O.,Typ: Firma</div>
<div class="t" style="left:598.62px;top:363.44px;font-size:10.4px;line-height:12.48px;font-weight:400;color:#8a8a8a;transform:scaleX(0.8864);-webkit-text-stroke:0.2px #8a8a8a;">2023-11-06</div>
<div class="t" style="left:703.88px;top:363.44px;font-size:10.4px;line-height:12.48px;font-weight:400;color:#8a8a8a;transform:scaleX(0.8783);-webkit-text-stroke:0.2px #8a8a8a;">2023-12-22</div>
<div class="a" style="left:808.75px;top:364.61px;width:43px;height:10.75px;border-radius:6px;background:#5dc184"></div>
<div class="t" style="left:814.62px;top:365.31px;font-size:7.5px;line-height:9.00px;font-weight:700;color:#fff;transform:scaleX(0.8339);">Zapłacono</div>
<div class="t" style="left:914.50px;top:363.44px;font-size:10.4px;line-height:12.48px;font-weight:400;color:#8a8a8a;transform:scaleX(0.8737);-webkit-text-stroke:0.2px #8a8a8a;">1300,00 zł</div>
<div class="t" style="left:1019.50px;top:363.44px;font-size:10.4px;line-height:12.48px;font-weight:400;color:#8a8a8a;transform:scaleX(0.8840);-webkit-text-stroke:0.2px #8a8a8a;">1300,00 zł</div>
<div class="t" style="left:1125.00px;top:363.44px;font-size:10.4px;line-height:12.48px;font-weight:700;color:#555;transform:scaleX(0.8984);">0,00 zł</div>
<svg class="a" style="left:1230.0px;top:377.5px;overflow:visible" width="8.75" height="20.0" viewBox="0 0 7 16"><circle cx="3.5" cy="3.5" r="1.55" fill="none" stroke="#8a8a8a" stroke-width="1.05"/><circle cx="3.5" cy="7.5" r="1.55" fill="none" stroke="#8a8a8a" stroke-width="1.05"/><circle cx="3.5" cy="12.0" r="1.55" fill="none" stroke="#8a8a8a" stroke-width="1.05"/></svg>
<div class="a" style="left:190.6px;top:405.28999999999996px;width:1058.4px;height:46.98px;background:#f9f9f9"></div>
<div class="a" style="left:290.3px;top:405.28999999999996px;width:1px;height:46.98px;background:#f1f1f1"></div>
<div class="a" style="left:390.6px;top:405.28999999999996px;width:1px;height:46.98px;background:#f1f1f1"></div>
<div class="a" style="left:590.4px;top:405.28999999999996px;width:1px;height:46.98px;background:#f1f1f1"></div>
<div class="a" style="left:695px;top:405.28999999999996px;width:1px;height:46.98px;background:#f1f1f1"></div>
<div class="a" style="left:800.9px;top:405.28999999999996px;width:1px;height:46.98px;background:#f1f1f1"></div>
<div class="a" style="left:905.75px;top:405.28999999999996px;width:1px;height:46.98px;background:#f1f1f1"></div>
<div class="a" style="left:1011.5px;top:405.28999999999996px;width:1px;height:46.98px;background:#f1f1f1"></div>
<div class="a" style="left:1116.9px;top:405.28999999999996px;width:1px;height:46.98px;background:#f1f1f1"></div>
<div class="a" style="left:1221.4px;top:405.28999999999996px;width:1px;height:46.98px;background:#f1f1f1"></div>
<div class="a" style="left:198.75px;top:410.89px;width:10.75px;height:10.75px;border:1.1px solid #cdd0da;border-radius:2px;background:#fff"></div>
<div class="t" style="left:214.88px;top:410.12px;font-size:10.4px;line-height:12.48px;font-weight:700;color:#4a5092;transform:scaleX(0.8291);">FV-1</div>
<div class="t" style="left:298.75px;top:410.12px;font-size:10.4px;line-height:12.48px;font-weight:400;color:#8a8a8a;transform:scaleX(0.8902);-webkit-text-stroke:0.2px #8a8a8a;">zamówienie 1</div>
<div class="t" style="left:398.62px;top:410.12px;font-size:10.4px;line-height:12.48px;font-weight:400;color:#434a8e;transform:scaleX(0.8299);-webkit-text-stroke:0.2px #434a8e;">ONE COMPANY SP. Z O.O.</div>
<div class="t" style="left:398.62px;top:424.86px;font-size:8.5px;line-height:10.20px;font-weight:400;color:#8a8a8a;transform:scaleX(0.9224);-webkit-text-stroke:0.12px #8a8a8a;">NIP: PL8943138124</div>
<div class="t" style="left:398.62px;top:437.61px;font-size:8.5px;line-height:10.20px;font-weight:400;color:#8a8a8a;transform:scaleX(0.8854);-webkit-text-stroke:0.12px #8a8a8a;">Prefiks: ONE COMPANY SP. Z O.O.,Typ: Firma</div>
<div class="t" style="left:598.62px;top:410.12px;font-size:10.4px;line-height:12.48px;font-weight:400;color:#8a8a8a;transform:scaleX(0.8864);-webkit-text-stroke:0.2px #8a8a8a;">2023-11-06</div>
<div class="t" style="left:703.88px;top:410.12px;font-size:10.4px;line-height:12.48px;font-weight:400;color:#8a8a8a;transform:scaleX(0.8783);-webkit-text-stroke:0.2px #8a8a8a;">2023-12-22</div>
<div class="a" style="left:808.75px;top:411.28999999999996px;width:43px;height:10.75px;border-radius:6px;background:#5dc184"></div>
<div class="t" style="left:814.62px;top:411.99px;font-size:7.5px;line-height:9.00px;font-weight:700;color:#fff;transform:scaleX(0.8339);">Zapłacono</div>
<div class="t" style="left:914.50px;top:410.12px;font-size:10.4px;line-height:12.48px;font-weight:400;color:#8a8a8a;transform:scaleX(0.8737);-webkit-text-stroke:0.2px #8a8a8a;">1300,00 zł</div>
<div class="t" style="left:1019.50px;top:410.12px;font-size:10.4px;line-height:12.48px;font-weight:400;color:#8a8a8a;transform:scaleX(0.8840);-webkit-text-stroke:0.2px #8a8a8a;">1300,00 zł</div>
<div class="t" style="left:1125.00px;top:410.12px;font-size:10.4px;line-height:12.48px;font-weight:700;color:#555;transform:scaleX(0.8984);">0,00 zł</div>
<svg class="a" style="left:1230.0px;top:425.0px;overflow:visible" width="8.75" height="20.0" viewBox="0 0 7 16"><circle cx="3.5" cy="2.5" r="1.55" fill="none" stroke="#8a8a8a" stroke-width="1.05"/><circle cx="3.5" cy="7.0" r="1.55" fill="none" stroke="#8a8a8a" stroke-width="1.05"/><circle cx="3.5" cy="11.5" r="1.55" fill="none" stroke="#8a8a8a" stroke-width="1.05"/></svg>
<div class="a" style="left:190.6px;top:451.97px;width:1058.4px;height:46.98px;background:#fff"></div>
<div class="a" style="left:290.3px;top:451.97px;width:1px;height:46.98px;background:#f1f1f1"></div>
<div class="a" style="left:390.6px;top:451.97px;width:1px;height:46.98px;background:#f1f1f1"></div>
<div class="a" style="left:590.4px;top:451.97px;width:1px;height:46.98px;background:#f1f1f1"></div>
<div class="a" style="left:695px;top:451.97px;width:1px;height:46.98px;background:#f1f1f1"></div>
<div class="a" style="left:800.9px;top:451.97px;width:1px;height:46.98px;background:#f1f1f1"></div>
<div class="a" style="left:905.75px;top:451.97px;width:1px;height:46.98px;background:#f1f1f1"></div>
<div class="a" style="left:1011.5px;top:451.97px;width:1px;height:46.98px;background:#f1f1f1"></div>
<div class="a" style="left:1116.9px;top:451.97px;width:1px;height:46.98px;background:#f1f1f1"></div>
<div class="a" style="left:1221.4px;top:451.97px;width:1px;height:46.98px;background:#f1f1f1"></div>
<div class="a" style="left:198.75px;top:457.57000000000005px;width:10.75px;height:10.75px;border:1.1px solid #cdd0da;border-radius:2px;background:#fff"></div>
<div class="t" style="left:214.88px;top:456.80px;font-size:10.4px;line-height:12.48px;font-weight:700;color:#4a5092;transform:scaleX(0.8291);">FV-1</div>
<div class="t" style="left:298.75px;top:456.80px;font-size:10.4px;line-height:12.48px;font-weight:400;color:#8a8a8a;transform:scaleX(0.8902);-webkit-text-stroke:0.2px #8a8a8a;">zamówienie 1</div>
<div class="t" style="left:398.62px;top:456.80px;font-size:10.4px;line-height:12.48px;font-weight:400;color:#434a8e;transform:scaleX(0.8299);-webkit-text-stroke:0.2px #434a8e;">ONE COMPANY SP. Z O.O.</div>
<div class="t" style="left:398.62px;top:471.54px;font-size:8.5px;line-height:10.20px;font-weight:400;color:#8a8a8a;transform:scaleX(0.9224);-webkit-text-stroke:0.12px #8a8a8a;">NIP: PL8943138124</div>
<div class="t" style="left:398.62px;top:484.29px;font-size:8.5px;line-height:10.20px;font-weight:400;color:#8a8a8a;transform:scaleX(0.8854);-webkit-text-stroke:0.12px #8a8a8a;">Prefiks: ONE COMPANY SP. Z O.O.,Typ: Firma</div>
<div class="t" style="left:598.62px;top:456.80px;font-size:10.4px;line-height:12.48px;font-weight:400;color:#8a8a8a;transform:scaleX(0.8864);-webkit-text-stroke:0.2px #8a8a8a;">2023-11-06</div>
<div class="t" style="left:703.88px;top:456.80px;font-size:10.4px;line-height:12.48px;font-weight:400;color:#8a8a8a;transform:scaleX(0.8783);-webkit-text-stroke:0.2px #8a8a8a;">2023-12-22</div>
<div class="a" style="left:808.75px;top:457.97px;width:52.4px;height:10.75px;border-radius:6px;background:#ec6f0c"></div>
<div class="t" style="left:814.62px;top:458.67px;font-size:7.5px;line-height:9.00px;font-weight:700;color:#fff;transform:scaleX(0.8584);">Niezapłacone</div>
<div class="t" style="left:809.25px;top:474.17px;font-size:7.5px;line-height:9.00px;font-weight:400;color:#555;transform:scaleX(0.8868);-webkit-text-stroke:0.35px #555;">29 dni opóźnienia</div>
<div class="t" style="left:914.50px;top:456.80px;font-size:10.4px;line-height:12.48px;font-weight:400;color:#8a8a8a;transform:scaleX(0.8737);-webkit-text-stroke:0.2px #8a8a8a;">1300,00 zł</div>
<div class="t" style="left:1019.50px;top:456.80px;font-size:10.4px;line-height:12.48px;font-weight:400;color:#8a8a8a;transform:scaleX(0.8625);-webkit-text-stroke:0.2px #8a8a8a;">0,00 zł</div>
<div class="t" style="left:1125.00px;top:456.80px;font-size:10.4px;line-height:12.48px;font-weight:700;color:#555;transform:scaleX(0.9149);">1300,00 zł</div>
<svg class="a" style="left:1230.0px;top:471.25px;overflow:visible" width="8.75" height="20.0" viewBox="0 0 7 16"><circle cx="3.5" cy="3.0" r="1.55" fill="none" stroke="#8a8a8a" stroke-width="1.05"/><circle cx="3.5" cy="7.5" r="1.55" fill="none" stroke="#8a8a8a" stroke-width="1.05"/><circle cx="3.5" cy="12.0" r="1.55" fill="none" stroke="#8a8a8a" stroke-width="1.05"/></svg>
<div class="a" style="left:190.6px;top:498.65px;width:1058.4px;height:46.98px;background:#f9f9f9"></div>
<div class="a" style="left:290.3px;top:498.65px;width:1px;height:46.98px;background:#f1f1f1"></div>
<div class="a" style="left:390.6px;top:498.65px;width:1px;height:46.98px;background:#f1f1f1"></div>
<div class="a" style="left:590.4px;top:498.65px;width:1px;height:46.98px;background:#f1f1f1"></div>
<div class="a" style="left:695px;top:498.65px;width:1px;height:46.98px;background:#f1f1f1"></div>
<div class="a" style="left:800.9px;top:498.65px;width:1px;height:46.98px;background:#f1f1f1"></div>
<div class="a" style="left:905.75px;top:498.65px;width:1px;height:46.98px;background:#f1f1f1"></div>
<div class="a" style="left:1011.5px;top:498.65px;width:1px;height:46.98px;background:#f1f1f1"></div>
<div class="a" style="left:1116.9px;top:498.65px;width:1px;height:46.98px;background:#f1f1f1"></div>
<div class="a" style="left:1221.4px;top:498.65px;width:1px;height:46.98px;background:#f1f1f1"></div>
<div class="a" style="left:198.75px;top:504.25px;width:10.75px;height:10.75px;border:1.1px solid #cdd0da;border-radius:2px;background:#fff"></div>
<div class="t" style="left:214.88px;top:503.48px;font-size:10.4px;line-height:12.48px;font-weight:700;color:#4a5092;transform:scaleX(0.8291);">FV-1</div>
<div class="t" style="left:298.75px;top:503.48px;font-size:10.4px;line-height:12.48px;font-weight:400;color:#8a8a8a;transform:scaleX(0.8902);-webkit-text-stroke:0.2px #8a8a8a;">zamówienie 1</div>
<div class="t" style="left:398.62px;top:503.48px;font-size:10.4px;line-height:12.48px;font-weight:400;color:#434a8e;transform:scaleX(0.8299);-webkit-text-stroke:0.2px #434a8e;">ONE COMPANY SP. Z O.O.</div>
<div class="t" style="left:398.62px;top:518.22px;font-size:8.5px;line-height:10.20px;font-weight:400;color:#8a8a8a;transform:scaleX(0.9224);-webkit-text-stroke:0.12px #8a8a8a;">NIP: PL8943138124</div>
<div class="t" style="left:398.62px;top:530.97px;font-size:8.5px;line-height:10.20px;font-weight:400;color:#8a8a8a;transform:scaleX(0.8854);-webkit-text-stroke:0.12px #8a8a8a;">Prefiks: ONE COMPANY SP. Z O.O.,Typ: Firma</div>
<div class="t" style="left:598.62px;top:503.48px;font-size:10.4px;line-height:12.48px;font-weight:400;color:#8a8a8a;transform:scaleX(0.8864);-webkit-text-stroke:0.2px #8a8a8a;">2023-11-06</div>
<div class="t" style="left:703.88px;top:503.48px;font-size:10.4px;line-height:12.48px;font-weight:400;color:#8a8a8a;transform:scaleX(0.8783);-webkit-text-stroke:0.2px #8a8a8a;">2023-12-22</div>
<div class="a" style="left:808.75px;top:504.65px;width:43px;height:10.75px;border-radius:6px;background:#5dc184"></div>
<div class="t" style="left:814.62px;top:505.35px;font-size:7.5px;line-height:9.00px;font-weight:700;color:#fff;transform:scaleX(0.8339);">Zapłacono</div>
<div class="t" style="left:914.50px;top:503.48px;font-size:10.4px;line-height:12.48px;font-weight:400;color:#8a8a8a;transform:scaleX(0.8737);-webkit-text-stroke:0.2px #8a8a8a;">1300,00 zł</div>
<div class="t" style="left:1019.50px;top:503.48px;font-size:10.4px;line-height:12.48px;font-weight:400;color:#8a8a8a;transform:scaleX(0.8840);-webkit-text-stroke:0.2px #8a8a8a;">1300,00 zł</div>
<div class="t" style="left:1125.00px;top:503.48px;font-size:10.4px;line-height:12.48px;font-weight:700;color:#555;transform:scaleX(0.8984);">0,00 zł</div>
<svg class="a" style="left:1230.0px;top:517.5px;overflow:visible" width="8.75" height="20.0" viewBox="0 0 7 16"><circle cx="3.5" cy="3.5" r="1.55" fill="none" stroke="#8a8a8a" stroke-width="1.05"/><circle cx="3.5" cy="8.0" r="1.55" fill="none" stroke="#8a8a8a" stroke-width="1.05"/><circle cx="3.5" cy="12.0" r="1.55" fill="none" stroke="#8a8a8a" stroke-width="1.05"/></svg>
<div class="a" style="left:190.6px;top:545.3299999999999px;width:1058.4px;height:46.98px;background:#fff"></div>
<div class="a" style="left:290.3px;top:545.3299999999999px;width:1px;height:46.98px;background:#f1f1f1"></div>
<div class="a" style="left:390.6px;top:545.3299999999999px;width:1px;height:46.98px;background:#f1f1f1"></div>
<div class="a" style="left:590.4px;top:545.3299999999999px;width:1px;height:46.98px;background:#f1f1f1"></div>
<div class="a" style="left:695px;top:545.3299999999999px;width:1px;height:46.98px;background:#f1f1f1"></div>
<div class="a" style="left:800.9px;top:545.3299999999999px;width:1px;height:46.98px;background:#f1f1f1"></div>
<div class="a" style="left:905.75px;top:545.3299999999999px;width:1px;height:46.98px;background:#f1f1f1"></div>
<div class="a" style="left:1011.5px;top:545.3299999999999px;width:1px;height:46.98px;background:#f1f1f1"></div>
<div class="a" style="left:1116.9px;top:545.3299999999999px;width:1px;height:46.98px;background:#f1f1f1"></div>
<div class="a" style="left:1221.4px;top:545.3299999999999px;width:1px;height:46.98px;background:#f1f1f1"></div>
<div class="a" style="left:198.75px;top:550.93px;width:10.75px;height:10.75px;border:1.1px solid #cdd0da;border-radius:2px;background:#fff"></div>
<div class="t" style="left:214.88px;top:550.16px;font-size:10.4px;line-height:12.48px;font-weight:700;color:#4a5092;transform:scaleX(0.8291);">FV-1</div>
<div class="t" style="left:298.75px;top:550.16px;font-size:10.4px;line-height:12.48px;font-weight:400;color:#8a8a8a;transform:scaleX(0.8902);-webkit-text-stroke:0.2px #8a8a8a;">zamówienie 1</div>
<div class="t" style="left:398.62px;top:550.16px;font-size:10.4px;line-height:12.48px;font-weight:400;color:#434a8e;transform:scaleX(0.8299);-webkit-text-stroke:0.2px #434a8e;">ONE COMPANY SP. Z O.O.</div>
<div class="t" style="left:398.62px;top:564.90px;font-size:8.5px;line-height:10.20px;font-weight:400;color:#8a8a8a;transform:scaleX(0.9224);-webkit-text-stroke:0.12px #8a8a8a;">NIP: PL8943138124</div>
<div class="t" style="left:398.62px;top:577.65px;font-size:8.5px;line-height:10.20px;font-weight:400;color:#8a8a8a;transform:scaleX(0.8854);-webkit-text-stroke:0.12px #8a8a8a;">Prefiks: ONE COMPANY SP. Z O.O.,Typ: Firma</div>
<div class="t" style="left:598.62px;top:550.16px;font-size:10.4px;line-height:12.48px;font-weight:400;color:#8a8a8a;transform:scaleX(0.8864);-webkit-text-stroke:0.2px #8a8a8a;">2023-11-06</div>
<div class="t" style="left:703.88px;top:550.16px;font-size:10.4px;line-height:12.48px;font-weight:400;color:#8a8a8a;transform:scaleX(0.8783);-webkit-text-stroke:0.2px #8a8a8a;">2023-12-22</div>
<div class="a" style="left:808.75px;top:551.3299999999999px;width:52.4px;height:10.75px;border-radius:6px;background:#edd27a"></div>
<div class="t" style="left:814.62px;top:552.03px;font-size:7.5px;line-height:9.00px;font-weight:700;color:#fff;transform:scaleX(0.8584);">Niezapłacone</div>
<div class="t" style="left:914.50px;top:550.16px;font-size:10.4px;line-height:12.48px;font-weight:400;color:#8a8a8a;transform:scaleX(0.8737);-webkit-text-stroke:0.2px #8a8a8a;">1300,00 zł</div>
<div class="t" style="left:1019.50px;top:550.16px;font-size:10.4px;line-height:12.48px;font-weight:400;color:#8a8a8a;transform:scaleX(0.8625);-webkit-text-stroke:0.2px #8a8a8a;">0,00 zł</div>
<div class="t" style="left:1125.00px;top:550.16px;font-size:10.4px;line-height:12.48px;font-weight:700;color:#555;transform:scaleX(0.9149);">1300,00 zł</div>
<svg class="a" style="left:1230.0px;top:565.0px;overflow:visible" width="8.75" height="20.0" viewBox="0 0 7 16"><circle cx="3.5" cy="2.5" r="1.55" fill="none" stroke="#8a8a8a" stroke-width="1.05"/><circle cx="3.5" cy="7.0" r="1.55" fill="none" stroke="#8a8a8a" stroke-width="1.05"/><circle cx="3.5" cy="11.5" r="1.55" fill="none" stroke="#8a8a8a" stroke-width="1.05"/></svg>
<div class="a" style="left:190.6px;top:592.01px;width:1058.4px;height:46.98px;background:#f9f9f9"></div>
<div class="a" style="left:290.3px;top:592.01px;width:1px;height:46.98px;background:#f1f1f1"></div>
<div class="a" style="left:390.6px;top:592.01px;width:1px;height:46.98px;background:#f1f1f1"></div>
<div class="a" style="left:590.4px;top:592.01px;width:1px;height:46.98px;background:#f1f1f1"></div>
<div class="a" style="left:695px;top:592.01px;width:1px;height:46.98px;background:#f1f1f1"></div>
<div class="a" style="left:800.9px;top:592.01px;width:1px;height:46.98px;background:#f1f1f1"></div>
<div class="a" style="left:905.75px;top:592.01px;width:1px;height:46.98px;background:#f1f1f1"></div>
<div class="a" style="left:1011.5px;top:592.01px;width:1px;height:46.98px;background:#f1f1f1"></div>
<div class="a" style="left:1116.9px;top:592.01px;width:1px;height:46.98px;background:#f1f1f1"></div>
<div class="a" style="left:1221.4px;top:592.01px;width:1px;height:46.98px;background:#f1f1f1"></div>
<div class="a" style="left:198.75px;top:597.61px;width:10.75px;height:10.75px;border:1.1px solid #cdd0da;border-radius:2px;background:#fff"></div>
<div class="t" style="left:214.88px;top:596.84px;font-size:10.4px;line-height:12.48px;font-weight:700;color:#4a5092;transform:scaleX(0.8291);">FV-1</div>
<div class="t" style="left:298.75px;top:596.84px;font-size:10.4px;line-height:12.48px;font-weight:400;color:#8a8a8a;transform:scaleX(0.8902);-webkit-text-stroke:0.2px #8a8a8a;">zamówienie 1</div>
<div class="t" style="left:398.62px;top:596.84px;font-size:10.4px;line-height:12.48px;font-weight:400;color:#434a8e;transform:scaleX(0.8299);-webkit-text-stroke:0.2px #434a8e;">ONE COMPANY SP. Z O.O.</div>
<div class="t" style="left:398.62px;top:611.58px;font-size:8.5px;line-height:10.20px;font-weight:400;color:#8a8a8a;transform:scaleX(0.9224);-webkit-text-stroke:0.12px #8a8a8a;">NIP: PL8943138124</div>
<div class="t" style="left:398.62px;top:624.33px;font-size:8.5px;line-height:10.20px;font-weight:400;color:#8a8a8a;transform:scaleX(0.8854);-webkit-text-stroke:0.12px #8a8a8a;">Prefiks: ONE COMPANY SP. Z O.O.,Typ: Firma</div>
<div class="t" style="left:598.62px;top:596.84px;font-size:10.4px;line-height:12.48px;font-weight:400;color:#8a8a8a;transform:scaleX(0.8864);-webkit-text-stroke:0.2px #8a8a8a;">2023-11-06</div>
<div class="t" style="left:703.88px;top:596.84px;font-size:10.4px;line-height:12.48px;font-weight:400;color:#8a8a8a;transform:scaleX(0.8783);-webkit-text-stroke:0.2px #8a8a8a;">2023-12-22</div>
<div class="a" style="left:808.75px;top:598.01px;width:43px;height:10.75px;border-radius:6px;background:#5dc184"></div>
<div class="t" style="left:814.62px;top:598.71px;font-size:7.5px;line-height:9.00px;font-weight:700;color:#fff;transform:scaleX(0.8339);">Zapłacono</div>
<div class="t" style="left:914.50px;top:596.84px;font-size:10.4px;line-height:12.48px;font-weight:400;color:#8a8a8a;transform:scaleX(0.8737);-webkit-text-stroke:0.2px #8a8a8a;">1300,00 zł</div>
<div class="t" style="left:1019.50px;top:596.84px;font-size:10.4px;line-height:12.48px;font-weight:400;color:#8a8a8a;transform:scaleX(0.8840);-webkit-text-stroke:0.2px #8a8a8a;">1300,00 zł</div>
<div class="t" style="left:1125.00px;top:596.84px;font-size:10.4px;line-height:12.48px;font-weight:700;color:#555;transform:scaleX(0.8984);">0,00 zł</div>
<svg class="a" style="left:1230.0px;top:611.25px;overflow:visible" width="8.75" height="20.0" viewBox="0 0 7 16"><circle cx="3.5" cy="3.0" r="1.55" fill="none" stroke="#8a8a8a" stroke-width="1.05"/><circle cx="3.5" cy="7.5" r="1.55" fill="none" stroke="#8a8a8a" stroke-width="1.05"/><circle cx="3.5" cy="12.0" r="1.55" fill="none" stroke="#8a8a8a" stroke-width="1.05"/></svg>
<div class="a" style="left:190.6px;top:638.69px;width:1058.4px;height:46.98px;background:#fff"></div>
<div class="a" style="left:290.3px;top:638.69px;width:1px;height:46.98px;background:#f1f1f1"></div>
<div class="a" style="left:390.6px;top:638.69px;width:1px;height:46.98px;background:#f1f1f1"></div>
<div class="a" style="left:590.4px;top:638.69px;width:1px;height:46.98px;background:#f1f1f1"></div>
<div class="a" style="left:695px;top:638.69px;width:1px;height:46.98px;background:#f1f1f1"></div>
<div class="a" style="left:800.9px;top:638.69px;width:1px;height:46.98px;background:#f1f1f1"></div>
<div class="a" style="left:905.75px;top:638.69px;width:1px;height:46.98px;background:#f1f1f1"></div>
<div class="a" style="left:1011.5px;top:638.69px;width:1px;height:46.98px;background:#f1f1f1"></div>
<div class="a" style="left:1116.9px;top:638.69px;width:1px;height:46.98px;background:#f1f1f1"></div>
<div class="a" style="left:1221.4px;top:638.69px;width:1px;height:46.98px;background:#f1f1f1"></div>
<div class="a" style="left:198.75px;top:644.2900000000001px;width:10.75px;height:10.75px;border:1.1px solid #cdd0da;border-radius:2px;background:#fff"></div>
<div class="t" style="left:214.88px;top:643.52px;font-size:10.4px;line-height:12.48px;font-weight:700;color:#4a5092;transform:scaleX(0.8291);">FV-1</div>
<div class="t" style="left:298.75px;top:643.52px;font-size:10.4px;line-height:12.48px;font-weight:400;color:#8a8a8a;transform:scaleX(0.8902);-webkit-text-stroke:0.2px #8a8a8a;">zamówienie 1</div>
<div class="t" style="left:398.62px;top:643.52px;font-size:10.4px;line-height:12.48px;font-weight:400;color:#434a8e;transform:scaleX(0.8299);-webkit-text-stroke:0.2px #434a8e;">ONE COMPANY SP. Z O.O.</div>
<div class="t" style="left:398.62px;top:658.26px;font-size:8.5px;line-height:10.20px;font-weight:400;color:#8a8a8a;transform:scaleX(0.9224);-webkit-text-stroke:0.12px #8a8a8a;">NIP: PL8943138124</div>
<div class="t" style="left:398.62px;top:671.01px;font-size:8.5px;line-height:10.20px;font-weight:400;color:#8a8a8a;transform:scaleX(0.8854);-webkit-text-stroke:0.12px #8a8a8a;">Prefiks: ONE COMPANY SP. Z O.O.,Typ: Firma</div>
<div class="t" style="left:598.62px;top:643.52px;font-size:10.4px;line-height:12.48px;font-weight:400;color:#8a8a8a;transform:scaleX(0.8864);-webkit-text-stroke:0.2px #8a8a8a;">2023-11-06</div>
<div class="t" style="left:703.88px;top:643.52px;font-size:10.4px;line-height:12.48px;font-weight:400;color:#8a8a8a;transform:scaleX(0.8783);-webkit-text-stroke:0.2px #8a8a8a;">2023-12-22</div>
<div class="a" style="left:808.75px;top:644.69px;width:52.4px;height:10.75px;border-radius:6px;background:#edd27a"></div>
<div class="t" style="left:814.62px;top:645.39px;font-size:7.5px;line-height:9.00px;font-weight:700;color:#fff;transform:scaleX(0.8584);">Niezapłacone</div>
<div class="t" style="left:914.50px;top:643.52px;font-size:10.4px;line-height:12.48px;font-weight:400;color:#8a8a8a;transform:scaleX(0.8737);-webkit-text-stroke:0.2px #8a8a8a;">1300,00 zł</div>
<div class="t" style="left:1019.50px;top:643.52px;font-size:10.4px;line-height:12.48px;font-weight:400;color:#8a8a8a;transform:scaleX(0.8625);-webkit-text-stroke:0.2px #8a8a8a;">0,00 zł</div>
<div class="t" style="left:1125.00px;top:643.52px;font-size:10.4px;line-height:12.48px;font-weight:700;color:#555;transform:scaleX(0.9149);">1300,00 zł</div>
<svg class="a" style="left:1230.0px;top:657.5px;overflow:visible" width="8.75" height="20.0" viewBox="0 0 7 16"><circle cx="3.5" cy="3.5" r="1.55" fill="none" stroke="#8a8a8a" stroke-width="1.05"/><circle cx="3.5" cy="8.0" r="1.55" fill="none" stroke="#8a8a8a" stroke-width="1.05"/><circle cx="3.5" cy="12.5" r="1.55" fill="none" stroke="#8a8a8a" stroke-width="1.05"/></svg>
<div class="a" style="left:190.6px;top:685.37px;width:1058.4px;height:46.98px;background:#f9f9f9"></div>
<div class="a" style="left:290.3px;top:685.37px;width:1px;height:46.98px;background:#f1f1f1"></div>
<div class="a" style="left:390.6px;top:685.37px;width:1px;height:46.98px;background:#f1f1f1"></div>
<div class="a" style="left:590.4px;top:685.37px;width:1px;height:46.98px;background:#f1f1f1"></div>
<div class="a" style="left:695px;top:685.37px;width:1px;height:46.98px;background:#f1f1f1"></div>
<div class="a" style="left:800.9px;top:685.37px;width:1px;height:46.98px;background:#f1f1f1"></div>
<div class="a" style="left:905.75px;top:685.37px;width:1px;height:46.98px;background:#f1f1f1"></div>
<div class="a" style="left:1011.5px;top:685.37px;width:1px;height:46.98px;background:#f1f1f1"></div>
<div class="a" style="left:1116.9px;top:685.37px;width:1px;height:46.98px;background:#f1f1f1"></div>
<div class="a" style="left:1221.4px;top:685.37px;width:1px;height:46.98px;background:#f1f1f1"></div>
<div class="a" style="left:198.75px;top:690.97px;width:10.75px;height:10.75px;border:1.1px solid #cdd0da;border-radius:2px;background:#fff"></div>
<div class="t" style="left:214.88px;top:690.20px;font-size:10.4px;line-height:12.48px;font-weight:700;color:#4a5092;transform:scaleX(0.8291);">FV-1</div>
<div class="t" style="left:298.75px;top:690.20px;font-size:10.4px;line-height:12.48px;font-weight:400;color:#8a8a8a;transform:scaleX(0.8902);-webkit-text-stroke:0.2px #8a8a8a;">zamówienie 1</div>
<div class="t" style="left:398.62px;top:690.20px;font-size:10.4px;line-height:12.48px;font-weight:400;color:#434a8e;transform:scaleX(0.8299);-webkit-text-stroke:0.2px #434a8e;">ONE COMPANY SP. Z O.O.</div>
<div class="t" style="left:398.62px;top:704.94px;font-size:8.5px;line-height:10.20px;font-weight:400;color:#8a8a8a;transform:scaleX(0.9224);-webkit-text-stroke:0.12px #8a8a8a;">NIP: PL8943138124</div>
<div class="t" style="left:398.62px;top:717.69px;font-size:8.5px;line-height:10.20px;font-weight:400;color:#8a8a8a;transform:scaleX(0.8854);-webkit-text-stroke:0.12px #8a8a8a;">Prefiks: ONE COMPANY SP. Z O.O.,Typ: Firma</div>
<div class="t" style="left:598.62px;top:690.20px;font-size:10.4px;line-height:12.48px;font-weight:400;color:#8a8a8a;transform:scaleX(0.8864);-webkit-text-stroke:0.2px #8a8a8a;">2023-11-06</div>
<div class="t" style="left:703.88px;top:690.20px;font-size:10.4px;line-height:12.48px;font-weight:400;color:#8a8a8a;transform:scaleX(0.8783);-webkit-text-stroke:0.2px #8a8a8a;">2023-12-22</div>
<div class="a" style="left:808.75px;top:691.37px;width:43px;height:10.75px;border-radius:6px;background:#5dc184"></div>
<div class="t" style="left:814.62px;top:692.07px;font-size:7.5px;line-height:9.00px;font-weight:700;color:#fff;transform:scaleX(0.8339);">Zapłacono</div>
<div class="t" style="left:914.50px;top:690.20px;font-size:10.4px;line-height:12.48px;font-weight:400;color:#8a8a8a;transform:scaleX(0.8737);-webkit-text-stroke:0.2px #8a8a8a;">1300,00 zł</div>
<div class="t" style="left:1019.50px;top:690.20px;font-size:10.4px;line-height:12.48px;font-weight:400;color:#8a8a8a;transform:scaleX(0.8840);-webkit-text-stroke:0.2px #8a8a8a;">1300,00 zł</div>
<div class="t" style="left:1125.00px;top:690.20px;font-size:10.4px;line-height:12.48px;font-weight:700;color:#555;transform:scaleX(0.8984);">0,00 zł</div>
<svg class="a" style="left:1230.0px;top:705.0px;overflow:visible" width="8.75" height="20.0" viewBox="0 0 7 16"><circle cx="3.5" cy="2.5" r="1.55" fill="none" stroke="#8a8a8a" stroke-width="1.05"/><circle cx="3.5" cy="7.0" r="1.55" fill="none" stroke="#8a8a8a" stroke-width="1.05"/><circle cx="3.5" cy="11.5" r="1.55" fill="none" stroke="#8a8a8a" stroke-width="1.05"/></svg>
<div class="a" style="left:1268.25px;top:0;width:11.75px;height:720px;background:#f1f1f1"></div>
<div class="a" style="left:1270px;top:11.06px;width:8.6px;height:554px;background:#c1c1c1"></div>
<svg class="a" style="left:1271.5px;top:4.3px" width="5.4" height="3.4" viewBox="0 0 10 6" preserveAspectRatio="none"><path d="M0 6 L5 0 L10 6 Z" fill="#a3a3a3"/></svg>
<svg class="a" style="left:1271.6px;top:711.9px" width="5.2" height="3.6" viewBox="0 0 10 6" preserveAspectRatio="none"><path d="M0 0 L5 6 L10 0 Z" fill="#505050"/></svg></div></body></html>
